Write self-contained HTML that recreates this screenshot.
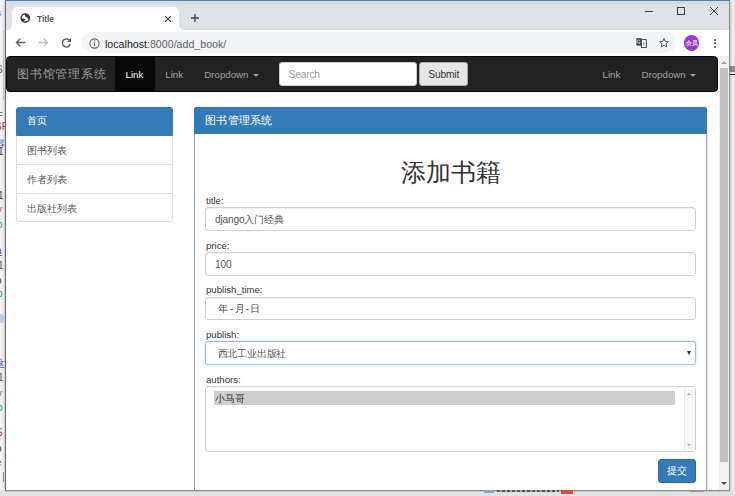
<!DOCTYPE html>
<html><head><meta charset="utf-8">
<style>
*{box-sizing:border-box;margin:0;padding:0}
html,body{width:735px;height:496px;overflow:hidden;background:#f3f3f3;font-family:"Liberation Sans",sans-serif;position:relative}
.a{position:absolute}
.txt{position:absolute;white-space:nowrap;line-height:1}
#win{left:5px;top:0;width:725px;height:490px;background:#fff;border-left:1px solid #62676d;border-right:1px solid #8c8c8c;box-shadow:0 2px 3px rgba(0,0,0,.3)}
#tabstrip{left:6px;top:0;width:723px;height:30px;background:#dee1e6}
#topline{left:5px;top:0;width:725px;height:1px;background:#58809f}
#topline2{left:6px;top:1px;width:723px;height:1px;background:#c8e0f2}
#topline3{left:6px;top:2px;width:723px;height:2px;background:#d3dce5}
#topline4{left:6px;top:4px;width:723px;height:3px;background:#e0dfe1}
#tab{left:12px;top:7px;width:167px;height:23px;background:#fff;border-radius:5px 5px 0 0}
#toolbar{left:6px;top:30px;width:723px;height:26px;background:#fff}
#pill{left:81px;top:32px;width:595px;height:20.5px;background:#f3f4f5;border-radius:11px}
#navbar{left:6px;top:56px;width:712px;height:36px;background:#222;border:1px solid #080808;border-radius:4px}
#page{left:6px;top:56px;width:713px;height:434px;background:#fff}
#sb{left:719px;top:56px;width:10px;height:434px;background:#f1f1f1}
#thumb{left:719.5px;top:68px;width:8.5px;height:394px;background:#c1c1c1}
.lg{position:absolute;left:16px;width:157px;height:29px;border:1px solid #ddd;background:#fff;color:#555;font-size:10px}
.lg span{position:absolute;left:10px;top:8px;white-space:nowrap;line-height:1}
.fc{position:absolute;left:205px;width:491px;height:23.6px;border:1px solid #d0d0d0;border-radius:3px;background:#fff;box-shadow:inset 0 1px 1px rgba(0,0,0,.05);color:#555;font-size:10.2px}
.fc span{position:absolute;left:9px;top:6.5px;white-space:nowrap;line-height:1;letter-spacing:-0.2px}
.lbl{position:absolute;left:206px;font-size:9.6px;color:#333;white-space:nowrap;line-height:1}
.nv{font-size:9.7px;color:#a3a3a3;top:69.6px}
</style></head><body>
<!-- background window fragments -->
<div class="a" style="left:0;top:0;width:5px;height:496px;background:#f2f2f2"></div>
<div class="a" style="left:3px;top:30px;width:1px;height:70px;background:#c9c9c9"></div>
<div class="a" style="left:730px;top:0;width:5px;height:496px;background:#e9e9e9"></div>
<div class="a" style="left:732px;top:0;width:1px;height:496px;background:#f4f4f4"></div>
<div class="a" style="left:730px;top:66px;width:5px;height:6px;background:#8a8a8a"></div>
<div class="a" style="left:730px;top:73.5px;width:5px;height:1.5px;background:#222"></div>
<div class="txt" style="left:-3px;top:9px;font-size:9px;color:#6d88a8">s</div>
<div class="txt" style="left:-4px;top:65px;font-size:10px;color:#666">S</div>
<div class="txt" style="left:-3px;top:93px;font-size:10px;color:#888">/</div>
<div class="txt" style="left:-3px;top:110px;font-size:10px;color:#777">=</div>
<div class="txt" style="left:-5px;top:122px;font-size:10px;color:#c0393b">SF</div>
<div class="txt" style="left:-5px;top:139px;font-size:10px;color:#4a5bb0">容</div>
<div class="txt" style="left:-2px;top:147px;font-size:10px;color:#444">1</div>
<div class="txt" style="left:-3px;top:177px;font-size:10px;color:#3d4fae;text-decoration:underline">t</div>
<div class="txt" style="left:-2px;top:191px;font-size:10px;color:#444">1</div>
<div class="txt" style="left:-3px;top:205px;font-size:10px;color:#d2365a">y</div>
<div class="txt" style="left:-3px;top:220px;font-size:10px;color:#2e9a5a">p</div>
<div class="txt" style="left:-4px;top:246px;font-size:10px;color:#4a4fae;text-decoration:underline">a</div>
<div class="txt" style="left:-2px;top:261px;font-size:10px;color:#555">1</div>
<div class="txt" style="left:-4px;top:276px;font-size:10px;color:#333">o</div>
<div class="txt" style="left:-3px;top:289px;font-size:10px;color:#2e9a5a">p</div>
<div class="a" style="left:-3px;top:314px;width:7px;height:9px;border-radius:4px;background:#b8d0ee"></div>
<div class="txt" style="left:-5px;top:359px;font-size:10px;color:#4a5bb0">这</div>
<div class="txt" style="left:-2px;top:373px;font-size:10px;color:#555">1</div>
<div class="txt" style="left:-3px;top:389px;font-size:10px;color:#d2365a">y</div>
<div class="txt" style="left:-3px;top:403px;font-size:10px;color:#2e9a5a">p</div>
<div class="txt" style="left:-4px;top:428px;font-size:10px;color:#c0393b">S</div>
<div class="txt" style="left:-4px;top:444px;font-size:10px;color:#333">o</div>
<div class="txt" style="left:-4px;top:458px;font-size:10px;color:#c0396b">e</div>
<div class="a" style="left:3px;top:472px;width:1px;height:10px;background:#999"></div>
<div id="win" class="a"></div>
<div id="tabstrip" class="a"></div>
<div id="topline" class="a"></div>
<div id="topline2" class="a"></div><div id="topline3" class="a"></div><div id="topline4" class="a"></div>
<div id="tab" class="a"></div>
<div class="a" style="left:179px;top:25px;width:5px;height:5px;background:#fff"></div>
<div class="a" style="left:179px;top:25px;width:5px;height:5px;background:#dee1e6;border-bottom-left-radius:5px"></div>
<div class="a" style="left:7px;top:25px;width:5px;height:5px;background:#fff"></div>
<div class="a" style="left:7px;top:25px;width:5px;height:5px;background:#dee1e6;border-bottom-right-radius:5px"></div>
<!-- globe -->
<svg class="a" style="left:18px;top:11px" width="15" height="15" viewBox="0 0 15 15"><defs><clipPath id="gc"><circle cx="7.3" cy="7.1" r="4.6"/></clipPath></defs><circle cx="7.3" cy="7.1" r="4.1" fill="#fff" stroke="#3c4043" stroke-width="1.6"/><g clip-path="url(#gc)" fill="#3c4043"><path d="M6.6 2L12 2L12 7.9L10 7.9C9.4 6.9 8.9 6.4 7.9 6.1C7 5.7 6.8 4.6 6.6 2Z"/><path d="M4.8 7.4C5.8 7.4 6.9 7.6 7.5 8.1C7.5 8.8 7.2 9.3 6.3 9.6C5.8 9.9 6 10.8 6.4 11.4L3.5 10.5L3.4 7.6Z"/></g></svg>
<div class="txt" style="left:37px;top:14.5px;font-size:8.3px;font-weight:bold;color:#505357">Title</div>
<svg class="a" style="left:165px;top:15.5px" width="6" height="6" viewBox="0 0 6 6"><path d="M0 0L6 6M6 0L0 6" stroke="#3c4043" stroke-width="1.2"/></svg>
<svg class="a" style="left:190.5px;top:14px" width="8" height="8" viewBox="0 0 8 8"><path d="M4 0V8M0 4H8" stroke="#3c4043" stroke-width="1.3"/></svg>
<!-- window controls -->
<div class="a" style="left:645px;top:10.5px;width:8px;height:1px;background:#3c4043"></div>
<div class="a" style="left:677px;top:7px;width:8px;height:7.5px;border:1px solid #3c4043"></div>
<svg class="a" style="left:709.5px;top:6.5px" width="8" height="8" viewBox="0 0 8 8"><path d="M0 0L8 8M8 0L0 8" stroke="#3c4043" stroke-width="1"/></svg>
<div id="toolbar" class="a"></div>
<div id="pill" class="a"></div>
<!-- back/fwd/reload -->
<svg class="a" style="left:14.8px;top:37.2px" width="11" height="11" viewBox="0 0 11 11"><path d="M10.5 5.5H1.5M5.5 1.5L1.5 5.5L5.5 9.5" fill="none" stroke="#5f6368" stroke-width="1.4"/></svg>
<svg class="a" style="left:37.5px;top:37.3px" width="11" height="11" viewBox="0 0 11 11"><path d="M0.5 5.5H9.5M5.5 1.5L9.5 5.5L5.5 9.5" fill="none" stroke="#bdc1c6" stroke-width="1.4"/></svg>
<svg class="a" style="left:60.5px;top:36.8px" width="11" height="11" viewBox="0 0 11 11"><path d="M9 4.2A4 4 0 1 0 9.3 7" fill="none" stroke="#5f6368" stroke-width="1.5"/><path d="M10 1V5H6Z" fill="#5f6368"/></svg>
<svg class="a" style="left:89px;top:37.7px" width="11" height="11" viewBox="0 0 11 11"><circle cx="5.5" cy="5.5" r="4.6" fill="none" stroke="#5f6368" stroke-width="1.1"/><path d="M5.5 4.6V8.2" stroke="#5f6368" stroke-width="1.2"/><circle cx="5.5" cy="3" r="0.7" fill="#5f6368"/></svg>
<div class="txt" style="left:105px;top:38.6px;font-size:10.65px;color:#202124">localhost<span style="color:#5f6368">:8000/add_book/</span></div>
<!-- translate, star, avatar, menu -->
<svg class="a" style="left:636px;top:38px" width="11" height="10" viewBox="0 0 11 10"><rect x="5.3" y="1.6" width="5" height="8" fill="#fff" stroke="#44474b" stroke-width="1"/><rect x="0.4" y="0.2" width="5.2" height="7.4" fill="#3c4043"/><path d="M4 2.6A1.6 1.6 0 1 0 4.2 4.4H2.9" fill="none" stroke="#e8e8e8" stroke-width="0.8"/><path d="M6.8 5H9M7.9 4.4V8" stroke="#888" stroke-width="0.7"/></svg>
<svg class="a" style="left:659px;top:38px" width="10" height="10" viewBox="0.5 0.5 11 11"><path d="M6 1L7.4 4.4L11 4.6L8.2 6.9L9.1 10.5L6 8.5L2.9 10.5L3.8 6.9L1 4.6L4.6 4.4Z" fill="none" stroke="#5f6368" stroke-width="1.1"/></svg>
<div class="a" style="left:684px;top:35.2px;width:15.4px;height:15.4px;border-radius:50%;background:#9b3ec4"></div>
<div class="txt" style="left:686.3px;top:39.5px;font-size:6px;letter-spacing:-0.3px;font-weight:bold;color:#f0d8f8;transform:scale(1.0,1.05)">会员</div>
<div class="a" style="left:713.6px;top:38.8px;width:2.1px;height:2.1px;background:#3c4043;border-radius:50%"></div>
<div class="a" style="left:713.6px;top:42.2px;width:2.1px;height:2.1px;background:#3c4043;border-radius:50%"></div>
<div class="a" style="left:713.6px;top:45.6px;width:2.1px;height:2.1px;background:#3c4043;border-radius:50%"></div>

<div id="page" class="a"></div>
<div id="navbar" class="a"></div>
<div class="a" style="left:115px;top:57px;width:40px;height:34px;background:#080808"></div>
<div class="txt" style="left:17px;top:68.2px;font-size:12px;letter-spacing:0.75px;color:#9d9d9d">图书馆管理系统</div>
<div class="txt nv" style="left:125.5px;color:#fff">Link</div>
<div class="txt nv" style="left:165.3px">Link</div>
<div class="txt nv" style="left:204.3px">Dropdown</div>
<div class="a" style="left:253.2px;top:74.3px;width:0;height:0;border-left:3px solid transparent;border-right:3px solid transparent;border-top:3px solid #9d9d9d"></div>
<div class="a" style="left:279px;top:62px;width:138px;height:24px;background:#fff;border:1px solid #ccc;border-radius:3px"></div>
<div class="txt nv" style="left:288.5px;top:70px;font-size:10.2px;letter-spacing:-0.15px;color:#999">Search</div>
<div class="a" style="left:419px;top:62px;width:49px;height:24px;background:#e6e6e6;border:1px solid #adadad;border-radius:3px"></div>
<div class="txt nv" style="left:428.3px;top:70px;font-size:10.2px;letter-spacing:-0.15px;color:#333">Submit</div>
<div class="txt nv" style="left:602.5px">Link</div>
<div class="txt nv" style="left:641.5px">Dropdown</div>
<div class="a" style="left:689.5px;top:74.3px;width:0;height:0;border-left:3px solid transparent;border-right:3px solid transparent;border-top:3px solid #9d9d9d"></div>

<!-- sidebar -->
<div class="lg" style="top:107px;height:29px;background:#337ab7;border-color:#337ab7;color:#fff;border-radius:3px 3px 0 0"><span>首页</span></div>
<div class="lg" style="top:136px;height:29px;border-top:0"><span style="top:9.5px">图书列表</span></div>
<div class="lg" style="top:164px;height:30px"><span style="top:9.5px">作者列表</span></div>
<div class="lg" style="top:193px;height:29px;border-radius:0 0 3px 3px"><span style="top:9.5px">出版社列表</span></div>
<!-- main panel -->
<div class="a" style="left:194px;top:107px;width:513px;height:400px;border:1px solid #337ab7;border-left-color:#8d9db0;border-right-color:#9dabbb;border-radius:3px"></div>
<div class="a" style="left:707px;top:134px;width:1px;height:360px;background:#dde4ea"></div>
<div class="a" style="left:194px;top:107px;width:513px;height:27px;background:#337ab7;border-radius:3px 3px 0 0"></div>
<div class="txt" style="left:205px;top:115px;font-size:11px;letter-spacing:0.3px;color:#fff">图书管理系统</div>
<div class="txt" style="left:401px;top:159.6px;font-size:25px;color:#333">添加书籍</div>

<div class="lbl" style="top:196px">title:</div>
<div class="fc" style="top:207px"><span>django入门经典</span></div>
<div class="lbl" style="top:240.5px">price:</div>
<div class="fc" style="top:252px"><span>100</span></div>
<div class="lbl" style="top:285px">publish_time:</div>
<div class="fc" style="top:296.5px;color:#444">
  <span style="left:11.8px;top:6.7px">年</span><span style="left:24px;top:6.7px">-</span><span style="left:29.3px;top:6.7px">月</span><span style="left:39.5px;top:6.7px">-</span><span style="left:43.6px;top:6.7px">日</span>
</div>
<div class="lbl" style="top:330px">publish:</div>
<div class="fc" style="top:341px;height:24px;border-color:#a6b6c6 #9fc0dc #9ccbe6 #9fc0dc;box-shadow:0 0 4px rgba(140,190,230,.45)"><span style="left:11.5px">西北工业出版社</span></div>
<div class="a" style="left:687px;top:351px;width:0;height:0;border-left:2.3px solid transparent;border-right:2.3px solid transparent;border-top:4px solid #333"></div>
<div class="lbl" style="top:375px">authors:</div>
<div class="fc" style="top:386px;height:65.5px">
  <div class="a" style="left:8px;top:3.7px;width:461px;height:14.5px;background:#cecece"></div>
  <span style="left:9px;top:7px;color:#333">小马哥</span>
  <div class="a" style="left:478px;top:0;width:11px;height:63.5px;background:#f7f7f7;border-left:1px solid #ececec"></div>
  <div class="a" style="left:481px;top:5.5px;width:0;height:0;border-left:2.5px solid transparent;border-right:2.5px solid transparent;border-bottom:2.5px solid #a3a3a3"></div>
  <div class="a" style="left:481px;top:56.5px;width:0;height:0;border-left:2.5px solid transparent;border-right:2.5px solid transparent;border-top:2.5px solid #a3a3a3"></div>
</div>
<div class="a" style="left:658px;top:459px;width:38px;height:24px;background:#337ab7;border:1px solid #2e6da4;border-radius:3px"></div>
<div class="txt" style="left:667px;top:466px;font-size:10px;color:#fff">提交</div>

<div id="sb" class="a"></div>
<div id="thumb" class="a"></div>
<div class="a" style="left:721px;top:60.5px;width:0;height:0;border-left:3px solid transparent;border-right:3px solid transparent;border-bottom:3px solid #a3a3a3"></div>
<div class="a" style="left:721px;top:481.5px;width:0;height:0;border-left:3px solid transparent;border-right:3px solid transparent;border-top:3px solid #505050"></div>
<div class="a" style="left:0;top:490px;width:735px;height:6px;background:#e2e2e2"></div>
<div class="a" style="left:5px;top:490px;width:725px;height:1px;background:#8a8a8a"></div>
<div class="a" style="left:5px;top:491px;width:725px;height:1px;background:#c6c6c6"></div>
<div class="a" style="left:484px;top:490px;width:10px;height:2.5px;background:#86a6c6"></div>
<div class="a" style="left:497px;top:490px;width:62px;height:1.5px;background:repeating-linear-gradient(90deg,#555 0 3px,#aaa 3px 5px)"></div>
<div class="a" style="left:561px;top:490px;width:12px;height:3.5px;background:#d8464c"></div>
<div class="a" style="left:690px;top:490px;width:14px;height:2px;background:#999"></div>
</body></html>
